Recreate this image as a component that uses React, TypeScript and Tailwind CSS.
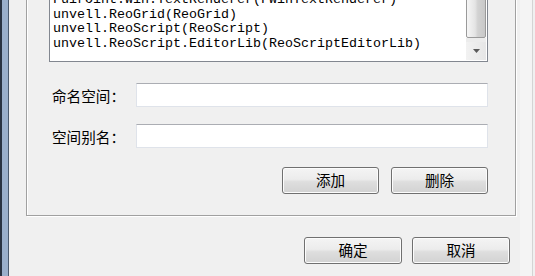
import React from "react";

const lines = [
  "FuirOint.Win.TextRenderer(FWinTextRenderer)",
  "unvell.ReoGrid(ReoGrid)",
  "unvell.ReoScript(ReoScript)",
  "unvell.ReoScript.EditorLib(ReoScriptEditorLib)",
];

function WinButton({ label, className = "" }: { label: string; className?: string }) {
  return (
    <button
      className={
        "h-[27px] rounded-[3px] border border-[#707070] bg-[linear-gradient(to_bottom,#f4f4f4_0%,#ececec_45%,#dedede_55%,#d2d2d2_100%)] shadow-[inset_0_0_0_1px_#fcfcfc] text-[14.6px] leading-none text-black flex items-center justify-center " +
        className
      }
    >
      {label}
    </button>
  );
}

function TextField() {
  return (
    <div className="w-[352px] h-[24px] bg-white border border-[#dfe3ea] border-t-[#abadb3]" />
  );
}

export default function App() {
  return (
    <div className="w-[535px] h-[276px] overflow-hidden bg-[#f0f0f0] flex font-['Noto_Sans_CJK_SC',sans-serif] text-black">
      {/* window frame, left side */}
      <div className="flex shrink-0">
        <div className="w-[2px] bg-[#2a3342]" />
        <div className="w-[6px] bg-[#9aafcb]" />
        <div className="w-[1px] bg-[#4b5a6e]" />
      </div>

      <div className="w-[511px] shrink-0 flex flex-col">
        {/* group box */}
        <div className="ml-[17px] mt-[-50px] w-[490px] border border-[#a0a0a0] shadow-[inset_1px_1px_0_#ffffff,1px_1px_0_#ffffff] pt-[9px] pl-[22px] pr-[27px] pb-[21px] flex flex-col">
          {/* list box */}
          <div className="h-[102px] w-[439px] border border-[#828790] bg-white flex">
            <div className="flex-1 pt-[32px] pl-[3px] font-['Liberation_Mono',monospace] text-[13.33px] leading-[14.5px] whitespace-nowrap overflow-hidden">
              {lines.map((l) => (
                <div key={l}>{l}</div>
              ))}
            </div>
            <div className="w-[20px] mr-[1px] py-[1px] flex flex-col">
              <div className="flex-1 border border-[#9a9a9a] rounded-b-[2px] bg-[linear-gradient(to_right,#f6f6f6,#e4e4e4_45%,#d2d2d2_60%,#c8c8c8)]" />
              <div className="h-[4px] bg-[#ececec]" />
              <div className="h-[18px] bg-[linear-gradient(to_right,#f2f2f2,#e6e6e6)] flex items-center justify-center">
                <svg width="7" height="4" viewBox="0 0 7 4">
                  <path d="M0 0h7L3.5 4z" fill="#5a5a5a" />
                </svg>
              </div>
            </div>
          </div>

          <div className="mt-[21px] flex items-center">
            <span className="w-[87px] pl-[3px] pt-[2px] text-[14.6px] leading-none">命名空间：</span>
            <TextField />
          </div>

          <div className="mt-[17px] flex items-center">
            <span className="w-[87px] pl-[3px] pt-[3px] text-[14.6px] leading-none">空间别名：</span>
            <TextField />
          </div>

          <div className="mt-[19px] flex justify-end gap-[12px]">
            <WinButton label="添加" className="w-[97px]" />
            <WinButton label="删除" className="w-[97px]" />
          </div>
        </div>

        <div className="mt-[21px] pr-[10px] flex justify-end gap-[10px]">
          <WinButton label="确定" className="w-[98px]" />
          <WinButton label="取消" className="w-[98px]" />
        </div>
      </div>

      {/* neighbouring pane edge */}
      <div className="flex-1 flex">
        <div className="w-[12px] bg-[#f4f4f4]" />
        <div className="w-[1px] bg-[#d4d4d4]" />
        <div className="flex-1" />
      </div>
    </div>
  );
}
